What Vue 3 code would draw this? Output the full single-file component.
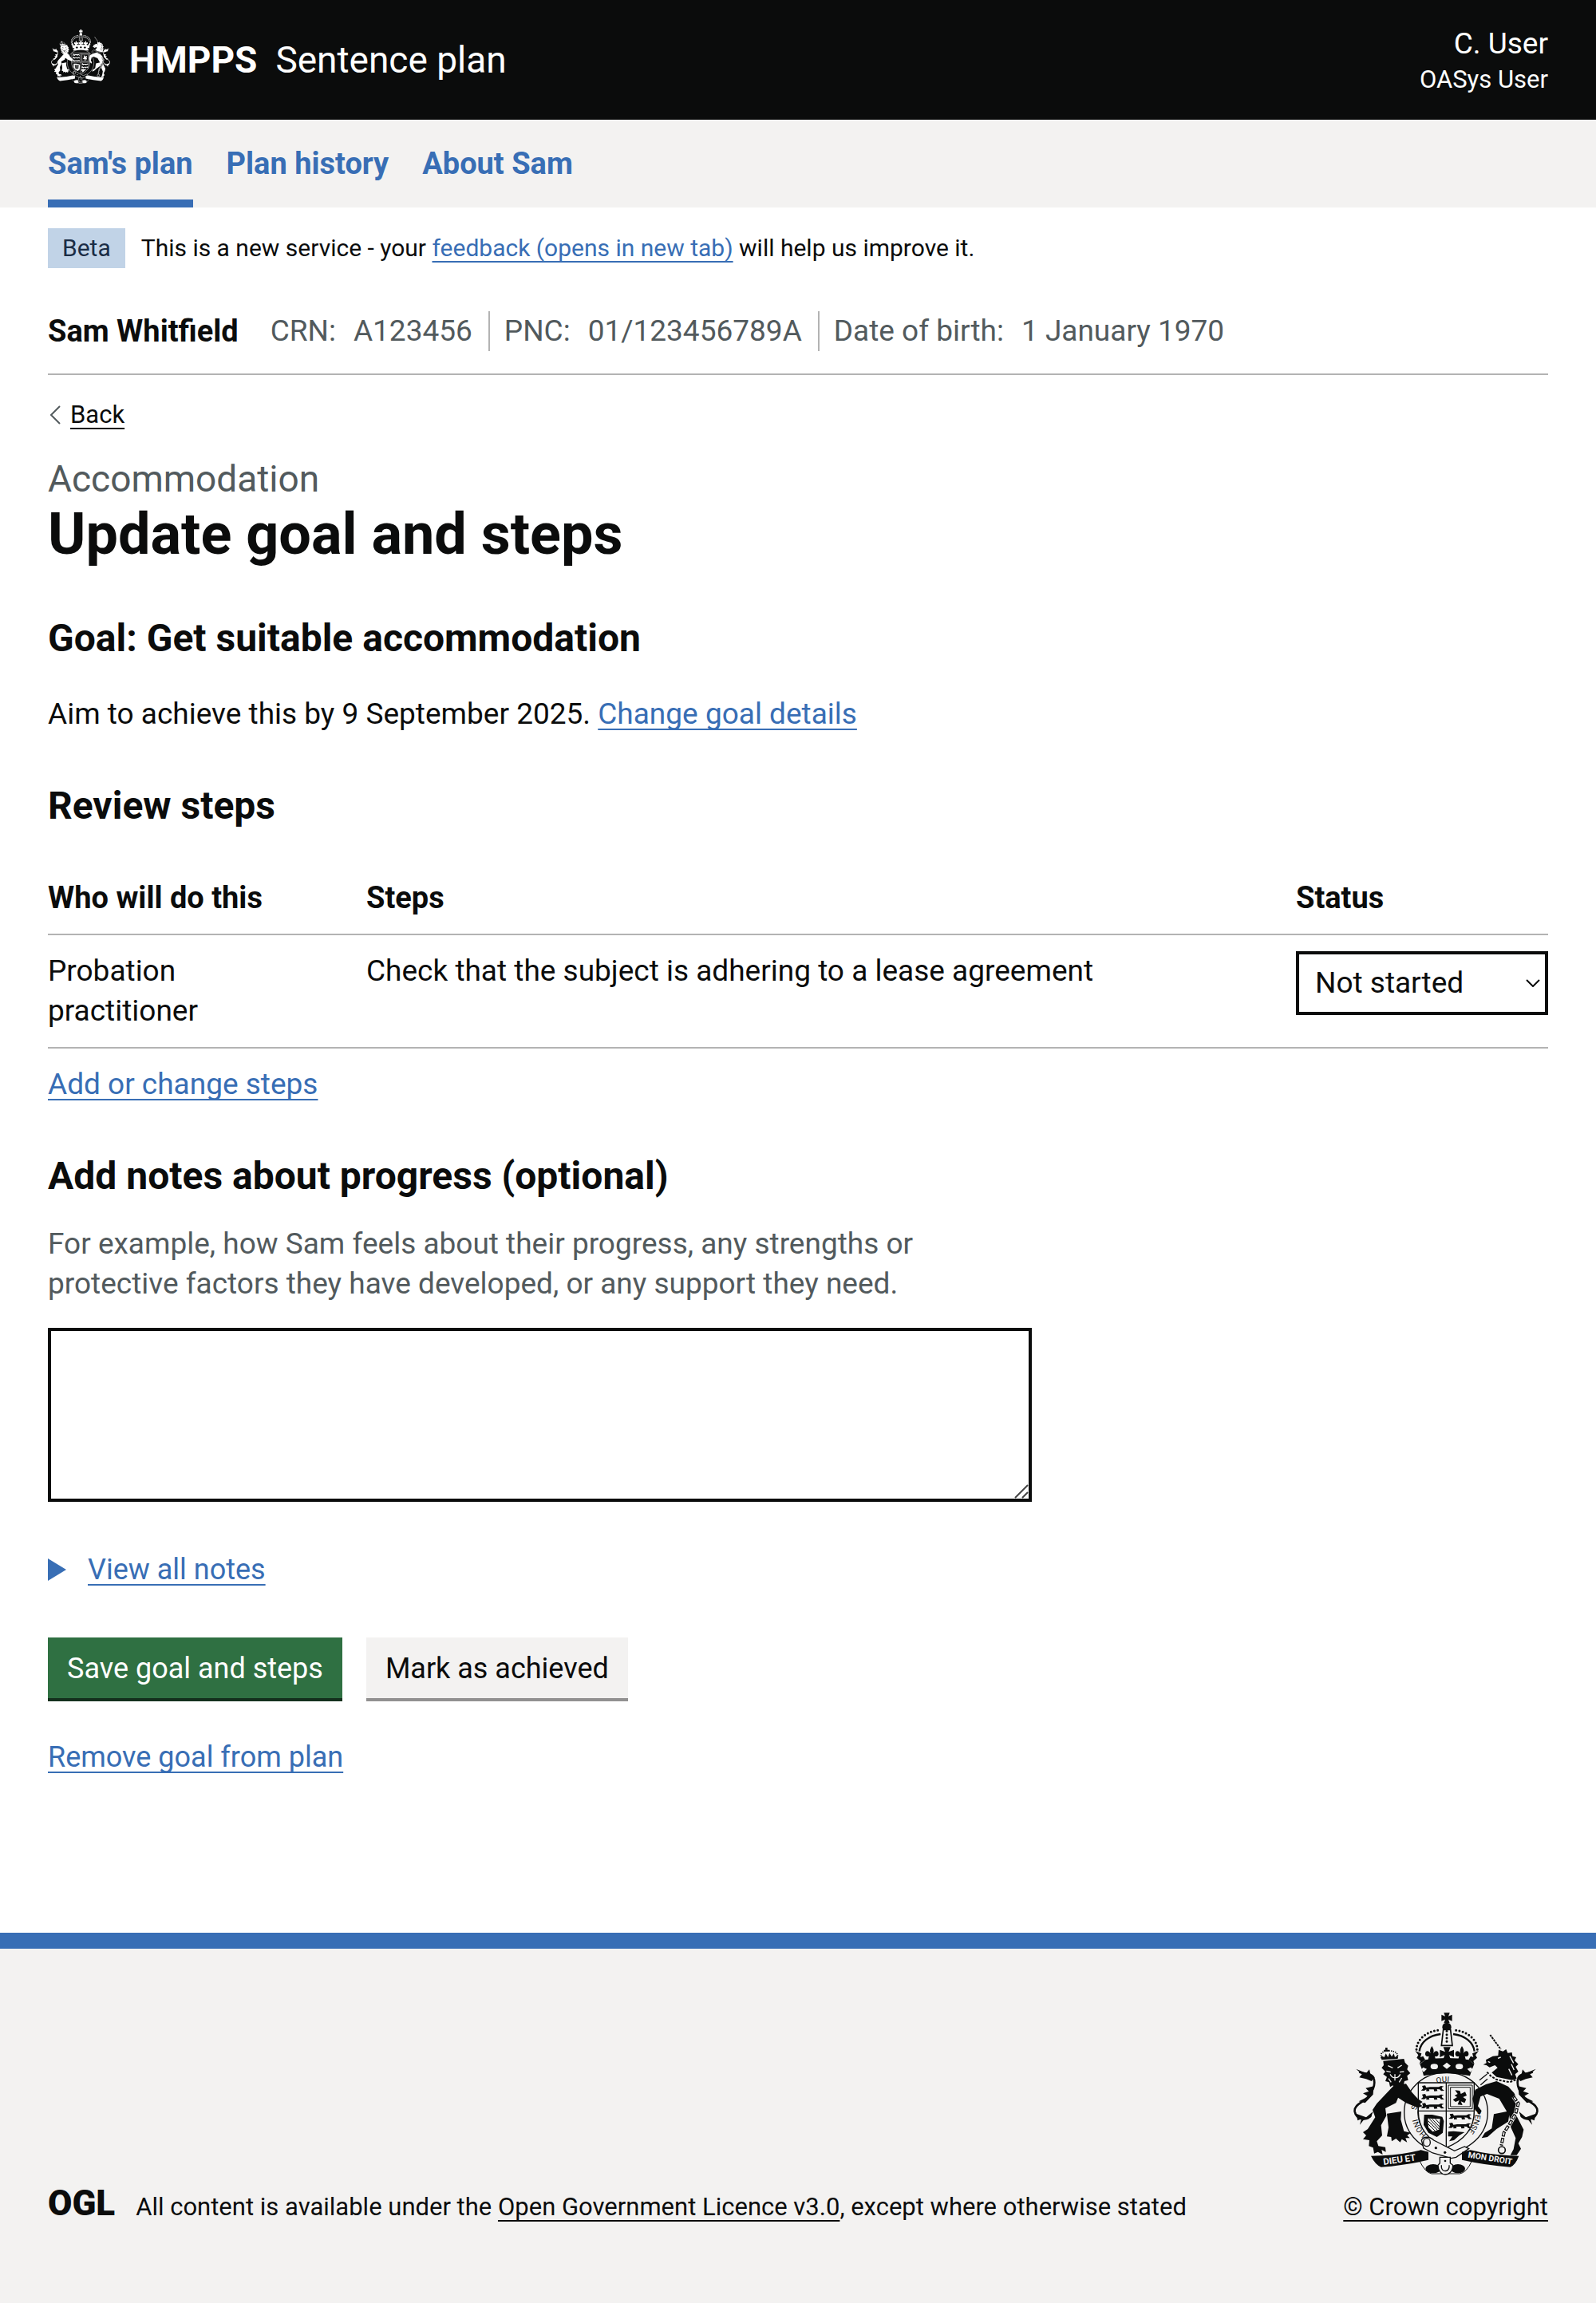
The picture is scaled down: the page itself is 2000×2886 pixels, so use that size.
<script setup>
import { ref } from 'vue'

const navItems = [
  { label: "Sam's plan", current: true },
  { label: 'Plan history', current: false },
  { label: 'About Sam', current: false },
]

const details = [
  { term: 'CRN:', value: 'A123456' },
  { term: 'PNC:', value: '01/123456789A' },
  { term: 'Date of birth:', value: '1 January 1970' },
]

const statuses = ['Not started', 'In progress', 'Cannot be done yet', 'No longer needed', 'Completed']

const steps = ref([
  {
    actor: 'Probation practitioner',
    text: 'Check that the subject is adhering to a lease agreement',
    status: 'Not started',
  },
])
const notes = ref('')
</script>

<template>
  <svg class="sprite" aria-hidden="true">
    <defs>
      <g id="crest-tail">
        <path d="M168 455C150 478 112 468 107 440C104 412 140 408 160 382C180 355 186 330 176 310C166 294 140 300 124 292" fill="none" stroke="currentColor" stroke-width="8" />
        <path d="M112 280L150 296L162 282L166 300L182 312L170 326L150 318L124 312L134 300Z" fill="currentColor" />
        <path d="M178 345L148 352L160 364L138 372L158 384L122 402L146 408L176 376Z" fill="currentColor" />
        <path d="M112 448L118 474L132 468L126 490L142 470L168 462L176 440L150 462Z" fill="currentColor" />
      </g>
      <g id="crest-arch">
        <path d="M339 207C340 165 385 134 432 134" fill="none" stroke="currentColor" stroke-width="9" stroke-linecap="round" stroke-dasharray="0 13" />
        <path d="M350 214C354 180 386 154 430 149" fill="none" stroke="currentColor" stroke-width="7" />
        <path d="M334 212L358 222L354 236L364 232L372 246L350 262L354 250L340 238L346 228Z" fill="currentColor" />
        <path d="M397 194C390 204 388 212 392 222C384 206 370 212 372 226C374 234 382 234 386 232L380 256H414L408 232C412 234 420 234 422 226C424 212 410 206 402 222C406 212 404 204 397 194Z" fill="currentColor" />
      </g>
      <g id="crest-pard">
        <path d="M4 2L16 0L20 8L34 6H66L76 2L86 4L78 8L80 14L88 20L76 21L70 15L60 14L62 21L50 22L48 15L30 15L32 21L20 22L20 15L12 20L0 19L8 12Z" fill="currentColor" />
      </g>
      <symbol id="crest" viewBox="102 68 696 612" preserveAspectRatio="none">
        <!-- garter and shield -->
        <ellipse cx="450" cy="443" rx="157" ry="150" fill="var(--paper)" stroke="currentColor" stroke-width="4" />
        <ellipse cx="450" cy="443" rx="106" ry="110" fill="var(--paper)" stroke="currentColor" stroke-width="3" />
        <path d="M346 332H556V440C556 505 515 550 451 576C387 550 346 505 346 440Z" fill="var(--paper)" stroke="currentColor" stroke-width="4" />
        <path d="M451 332V576M346 438H556" stroke="currentColor" stroke-width="4" />
        <use href="#crest-pard" x="356" y="342" />
        <use href="#crest-pard" x="356" y="374" />
        <use href="#crest-pard" x="356" y="408" />
        <use href="#crest-pard" x="460" y="448" />
        <use href="#crest-pard" x="458" y="482" />
        <path d="M458 516L478 514L520 518L500 530L480 548L462 552L474 534L458 534Z" fill="currentColor" />
        <path d="M459 341H549V430H459ZM467 349H541V422H467Z" fill="none" stroke="currentColor" stroke-width="3" />
        <path d="M484 360L502 362L506 374L522 366L528 380L514 386L526 394L520 408L506 402L512 416L494 414L500 398L486 404L476 396L492 386L482 380L494 374Z" fill="currentColor" />
        <path d="M368 452H398L436 460L442 476L438 520L416 536L384 520L366 490Z" fill="currentColor" />
        <path d="M382 466L428 468L424 508L400 516L384 500Z" fill="var(--paper)" />
        <path d="M388 468L424 506M398 468L426 498M410 468L427 486M384 476L418 510M384 488L408 512" stroke="currentColor" stroke-width="3" />
        <!-- belt -->
        <path d="M358 548C364 534 388 532 404 548L482 588L520 572L536 580L488 612L470 616L400 596L366 578Z" fill="var(--paper)" stroke="currentColor" stroke-width="4" />
        <ellipse cx="378" cy="556" rx="13" ry="15" fill="none" stroke="currentColor" stroke-width="4" />
        <circle cx="412" cy="577" r="5" fill="currentColor" />
        <circle cx="446" cy="594" r="5" fill="currentColor" />
        <path d="M350 624Q372 670 396 674H502Q528 670 548 624" fill="none" stroke="currentColor" stroke-width="3" />
        <ellipse cx="402" cy="655" rx="29" ry="17" fill="currentColor" />
        <ellipse cx="495" cy="655" rx="27" ry="17" fill="currentColor" />
        <path d="M427 612H466V634L476 642C476 666 460 677 447 677C434 677 420 664 420 642L427 634Z" fill="var(--paper)" stroke="currentColor" stroke-width="4" />
        <path d="M433 642V650C436 668 458 668 462 650V642" fill="none" stroke="currentColor" stroke-width="4" />
        <circle cx="447" cy="626" r="4" fill="currentColor" />
        <!-- scrolls -->
        <path d="M168 607L208 606Q290 602 356 585L384 592V622Q300 642 206 649Q184 640 168 607Z" fill="currentColor" />
        <path d="M724 607L690 606Q610 602 542 585L510 592V622Q600 642 692 649Q712 640 724 607Z" fill="currentColor" />
        <!-- crown -->
        <path d="M442 69H464L459 82L473 76V100L459 94L464 108H442L447 94L433 100V76L447 82Z" fill="currentColor" />
        <circle cx="453" cy="123" r="17" fill="currentColor" />
        <use href="#crest-arch" />
        <use href="#crest-arch" transform="matrix(-1 0 0 1 907 0)" />
        <path d="M440 132L433 192H474L467 132Z" fill="var(--paper)" stroke="currentColor" stroke-width="5" />
        <path d="M453 138V190" stroke="currentColor" stroke-width="9" stroke-linecap="round" stroke-dasharray="0 13" />
        <path d="M440 198H467L460 216L480 208V236L462 228L470 252H437L445 228L427 236V208L447 216Z" fill="currentColor" />
        <path d="M352 262L372 246Q453 232 536 246L556 262L548 282L540 306Q453 288 366 306L360 282Z" fill="currentColor" />
        <ellipse cx="406" cy="271" rx="14" ry="10" fill="var(--paper)" />
        <ellipse cx="500" cy="271" rx="14" ry="10" fill="var(--paper)" />
        <path d="M453 256L468 268L453 280L438 268ZM364 274L378 280L366 292L358 282ZM544 274L530 280L542 292L550 282Z" fill="var(--paper)" />
        <!-- lion -->
        <use href="#crest-tail" />
        <path d="M256 340L300 336L322 368L344 392L362 404L352 412L362 420L344 426L300 408L270 388L262 408L222 428L226 456L206 492L210 530L190 552L196 570L222 574L224 592L208 584L212 602L194 592L180 598L176 576L160 570L162 548L138 544L150 530L138 518L156 506L184 462L174 434L190 410Z" fill="currentColor" />
        <path d="M228 448L282 440L280 470L292 514L318 520L304 530L314 540L298 540L304 556L284 544L278 556L262 542L246 552L244 536L228 534L234 500Z" fill="currentColor" />
        <path d="M214 250L292 242L296 256L308 268L304 282L316 296L304 306L308 322L294 326L290 342L276 340L264 356L250 342L240 348L236 330L222 326L228 310L214 300L222 290L208 276L216 266Z" fill="currentColor" />
        <path d="M232 268L250 276M284 266L268 276M258 300V324M240 300Q250 316 258 312Q270 316 278 300M226 288L242 292M292 290L276 292M234 316L244 330M284 314L274 330" fill="none" stroke="var(--paper)" stroke-width="4" />
        <path d="M208 240C200 220 214 212 236 212C260 212 274 222 266 240" fill="none" stroke="currentColor" stroke-width="5" stroke-dasharray="4 4" />
        <path d="M208 246L206 230L218 236L224 222L232 236L238 220L246 234L254 222L258 236L270 228L268 242ZM222 200H230V208H238V214H216V208H222Z" fill="currentColor" />
        <!-- unicorn -->
        <use href="#crest-tail" transform="matrix(-1 0 0 1 900 0)" />
        <path d="M616 152L656 206" stroke="currentColor" stroke-width="6" stroke-dasharray="8 3" />
        <path d="M648 208L664 214L676 206L682 220L698 218L700 232L714 236L708 248L722 262L712 272L722 290L710 300L716 316L698 322L640 310L622 294L644 276L634 266L614 274L602 266L590 264L602 258L600 246L626 232L646 230Z" fill="currentColor" />
        <path d="M645 240L656 236M690 232L704 258M696 262L706 284M686 280L698 304M608 252L616 256" stroke="var(--paper)" stroke-width="4" />
        <path d="M604 292L620 308L640 320L690 330L714 320" fill="none" stroke="currentColor" stroke-width="6" stroke-dasharray="9 5" />
        <path d="M600 338L640 326L684 346L706 370L724 408L716 458L742 508L736 536L722 560L732 580L716 604L692 604L704 582L712 540L694 500L688 456L650 392L604 374L580 384L570 420L584 438L576 452L558 432L550 392L560 358Z" fill="currentColor" />
        <path d="M630 450L690 438L684 478L640 506L606 536L584 540L596 520L622 504Z" fill="currentColor" />
        <path d="M576 322L604 300M580 340L606 318" stroke="currentColor" stroke-width="4" />
        <path d="M704 384L722 410L712 448L690 486L668 520L658 568" fill="none" stroke="var(--paper)" stroke-width="16" />
        <path d="M704 384L722 410L712 448L690 486L668 520L658 568" fill="none" stroke="currentColor" stroke-width="12" stroke-dasharray="20 5" />
        <path d="M704 384L722 410L712 448L690 486L668 520L658 568" fill="none" stroke="var(--paper)" stroke-width="5" stroke-dasharray="12 13" stroke-dashoffset="-4" />
        <circle cx="660" cy="585" r="13" fill="none" stroke="currentColor" stroke-width="5" />
      </symbol>
    </defs>
  </svg>

  <div class="page">
    <header class="header">
      <div class="brand">
        <svg class="brand-crest" aria-hidden="true"><use href="#crest" /></svg>
        <a class="brand-org" href="#">HMPPS</a>
        <a class="brand-service" href="#">Sentence plan</a>
      </div>
      <div class="user">
        <span class="user-name">C. User</span>
        <span class="user-role">OASys User</span>
      </div>
    </header>

    <nav class="nav" aria-label="Primary">
      <a
        v-for="item in navItems"
        :key="item.label"
        href="#"
        class="nav-link"
        :class="{ current: item.current }"
        :aria-current="item.current ? 'page' : undefined"
      >{{ item.label }}</a>
    </nav>

    <div class="container">
      <div class="phase">
        <strong class="tag">Beta</strong>
        <span>This is a new service - your <a class="link" href="#">feedback (opens in new tab)</a> will help us improve it.</span>
      </div>

      <div class="person">
        <strong class="person-name">Sam Whitfield</strong>
        <dl class="person-list">
          <div v-for="d in details" :key="d.term" class="person-item">
            <dt>{{ d.term }}</dt>
            <dd>{{ d.value }}</dd>
          </div>
        </dl>
      </div>

      <div class="back">
        <svg viewBox="0 0 14 24" aria-hidden="true"><path d="M13 1L2 12L13 23" /></svg>
        <a class="link dark" href="#">Back</a>
      </div>

      <main>
        <div class="caption">Accommodation</div>
        <h1>Update goal and steps</h1>

        <h2>Goal: Get suitable accommodation</h2>
        <p class="aim">Aim to achieve this by 9 September 2025. <a class="link" href="#">Change goal details</a></p>

        <h2>Review steps</h2>
        <table>
          <thead>
            <tr>
              <th scope="col" class="col-who">Who will do this</th>
              <th scope="col">Steps</th>
              <th scope="col" class="col-status">Status</th>
            </tr>
          </thead>
          <tbody>
            <tr v-for="(step, i) in steps" :key="i">
              <td class="col-who">{{ step.actor }}</td>
              <td>{{ step.text }}</td>
              <td>
                <div class="select-wrap">
                  <select :id="`status-${i}`" v-model="step.status" :aria-label="`Status of step ${i + 1}`">
                    <option v-for="s in statuses" :key="s">{{ s }}</option>
                  </select>
                  <svg viewBox="0 0 18 10" aria-hidden="true"><path d="M1 1L9 9L17 1" /></svg>
                </div>
              </td>
            </tr>
          </tbody>
        </table>
        <p class="change-steps"><a class="link" href="#">Add or change steps</a></p>

        <h2><label for="notes">Add notes about progress (optional)</label></h2>
        <div class="notes">
          <p id="notes-hint" class="hint">For example, how Sam feels about their progress, any strengths or protective factors they have developed, or any support they need.</p>
          <div class="textarea-wrap">
            <textarea id="notes" v-model="notes" aria-describedby="notes-hint"></textarea>
            <svg viewBox="0 0 18 18" aria-hidden="true"><path d="M1 17L17 1M10 17L17 10" /></svg>
          </div>
        </div>

        <details>
          <summary><span class="link">View all notes</span></summary>
        </details>

        <div class="buttons">
          <button type="submit" class="button primary">Save goal and steps</button>
          <button type="button" class="button secondary">Mark as achieved</button>
        </div>
        <p class="remove"><a class="link" href="#">Remove goal from plan</a></p>
      </main>
    </div>

    <footer class="footer">
      <div class="licence">
        <span class="ogl">OGL</span>
        <span>All content is available under the <a class="link dark" href="#">Open Government Licence v3.0</a>, except where otherwise stated</span>
      </div>
      <div class="copyright">
        <svg class="footer-crest" viewBox="102 68 696 612" aria-hidden="true">
          <use href="#crest" x="102" y="68" width="696" height="612" />
          <path id="motto-ring" d="M385 533A110 113 0 1 1 515 533" fill="none" />
          <text class="motto"><textPath href="#motto-ring" startOffset="10">HONI</textPath></text>
          <text class="motto"><textPath href="#motto-ring" startOffset="112">SO</textPath></text>
          <text class="motto"><textPath href="#motto-ring" startOffset="245">QUI</textPath></text>
          <text class="motto"><textPath href="#motto-ring" startOffset="446">PENSE</textPath></text>
          <text class="scroll-text" x="216" y="641" transform="rotate(-8 216 641)">DIEU ET</text>
          <text class="scroll-text small" x="532" y="613" transform="rotate(9 532 613)">MON DROIT</text>
        </svg>
        <a class="link dark" href="#">© Crown copyright</a>
      </div>
    </footer>
  </div>
</template>

<style>
body {
  margin: 0;
  background: #fff;
}
</style>

<style scoped>
.page {
  --ink: #0b0c0c;
  --blue: #386eb5;
  --grey-text: #525a5d;
  --panel: #f3f2f1;
  --rule: #b3b3b3;
  font: 400 37px/50px Roboto, "Liberation Sans", sans-serif;
  color: var(--ink);
}
.sprite {
  position: absolute;
  width: 0;
  height: 0;
}
h1, h2, p, dl, dd {
  margin: 0;
}
.link {
  color: var(--blue);
  text-decoration: underline;
  text-decoration-thickness: 2px;
  text-decoration-skip-ink: none;
  text-underline-offset: 6px;
}
.link.dark {
  color: var(--ink);
}

.header {
  display: flex;
  justify-content: space-between;
  align-items: center;
  padding: 30px 60px;
  background: var(--ink);
  color: #fff;
}
.brand {
  display: flex;
  align-items: center;
  font-size: 46px;
  line-height: 56px;
}
.brand a {
  color: #fff;
  text-decoration: none;
}
.brand-crest {
  --paper: var(--ink);
  width: 74px;
  height: 68px;
  margin: 0 24px 8px 4px;
}
.brand-org {
  font-weight: 700;
  margin-right: 23px;
}
.user {
  display: flex;
  flex-direction: column;
  text-align: right;
}
.user-role {
  font-size: 31px;
  line-height: 40px;
}

.nav {
  display: flex;
  gap: 42px;
  padding: 30px 60px 0;
  background: var(--panel);
}
.nav-link {
  padding-bottom: 20px;
  border-bottom: 10px solid transparent;
  font-size: 38px;
  font-weight: 700;
  color: var(--blue);
  text-decoration: none;
}
.nav-link.current {
  border-color: var(--blue);
}

.container {
  padding: 26px 60px 195px;
}
.phase {
  display: flex;
  gap: 20px;
  font-size: 30px;
}
.tag {
  padding: 0 18px;
  background: #c1d3e7;
  color: #1b2d46;
  font-weight: 400;
}

.person {
  display: flex;
  gap: 40px;
  margin-top: 54px;
  padding-bottom: 28px;
  border-bottom: 2px solid var(--rule);
}
.person-name {
  font-size: 38px;
  font-weight: 700;
}
.person-list {
  display: flex;
  color: var(--grey-text);
}
.person-item {
  display: flex;
  gap: 22px;
}
.person-item + .person-item {
  margin-left: 20px;
  padding-left: 18px;
  border-left: 2px solid var(--rule);
}

.back {
  display: flex;
  align-items: center;
  gap: 12px;
  margin-top: 30px;
  padding-left: 2px;
  font-size: 31px;
  line-height: 40px;
}
.back svg {
  width: 14px;
  height: 24px;
  fill: none;
  stroke: var(--grey-text);
  stroke-width: 2;
}

.caption {
  margin-top: 30px;
  font-size: 46px;
  line-height: 60px;
  color: var(--grey-text);
}
h1 {
  font-size: 72px;
  line-height: 80px;
  font-weight: 700;
}
h2 {
  margin-top: 60px;
  font-size: 48px;
  line-height: 60px;
  font-weight: 700;
}
.aim {
  margin-top: 40px;
}

table {
  width: 100%;
  margin-top: 40px;
  border-collapse: separate;
  border-spacing: 0;
  table-layout: fixed;
}
th, td {
  padding: 20px 40px 20px 0;
  border-bottom: 2px solid var(--rule);
  text-align: left;
  vertical-align: top;
}
th {
  font-size: 38px;
  font-weight: 700;
}
th:last-child, td:last-child {
  padding-right: 0;
}
.col-who {
  width: 319px;
  padding-right: 80px;
}
.col-status {
  width: 316px;
}
.select-wrap, .textarea-wrap {
  position: relative;
}
select {
  display: block;
  box-sizing: border-box;
  width: 100%;
  height: 80px;
  padding: 0 40px 0 20px;
  border: 4px solid var(--ink);
  border-radius: 0;
  appearance: none;
  background: #fff;
  color: var(--ink);
  font: inherit;
}
.select-wrap svg {
  position: absolute;
  right: 10px;
  top: 35px;
  width: 18px;
  height: 10px;
  fill: none;
  stroke: var(--ink);
  stroke-width: 2;
  pointer-events: none;
}
.change-steps {
  margin-top: 20px;
}

.notes {
  width: calc((100% + 60px) * 2 / 3 - 60px);
  margin-top: 30px;
}
.hint {
  max-width: 1110px;
  color: var(--grey-text);
}
.textarea-wrap {
  margin-top: 30px;
}
textarea {
  display: block;
  box-sizing: border-box;
  width: 100%;
  height: 218px;
  padding: 10px;
  border: 4px solid var(--ink);
  border-radius: 0;
  background: #fff;
  color: var(--ink);
  font: inherit;
  resize: vertical;
}
textarea::-webkit-resizer {
  display: none;
}
.textarea-wrap svg {
  position: absolute;
  right: 4px;
  bottom: 4px;
  width: 18px;
  height: 18px;
  fill: none;
  stroke: #444;
  stroke-width: 2;
  pointer-events: none;
}

details {
  margin-top: 60px;
}
summary {
  display: flex;
  align-items: center;
  gap: 27px;
  list-style: none;
  font-size: 36px;
  cursor: pointer;
}
summary::before {
  content: "";
  border-style: solid;
  border-width: 14px 0 14px 23px;
  border-color: transparent transparent transparent var(--blue);
}

.buttons {
  display: flex;
  gap: 30px;
  margin-top: 60px;
}
.button {
  height: 80px;
  padding: 2px 24px 0;
  border: 0;
  border-bottom: 4px solid;
  font: inherit;
  font-size: 36px;
}
.primary {
  background: #2f7042;
  border-color: #14301d;
  color: #fff;
}
.secondary {
  background: var(--panel);
  border-color: #929191;
  color: var(--ink);
}
.remove {
  margin-top: 45px;
  font-size: 36px;
}

.footer {
  display: flex;
  justify-content: space-between;
  align-items: flex-end;
  padding: 80px 60px 100px;
  border-top: 20px solid var(--blue);
  background: var(--panel);
  font-size: 31px;
  line-height: 40px;
}
.licence {
  display: flex;
  align-items: baseline;
  gap: 26px;
}
.ogl {
  font-size: 44px;
  font-weight: 900;
}
.copyright {
  display: flex;
  flex-direction: column;
  align-items: center;
  gap: 20px;
}
.footer-crest {
  --paper: var(--panel);
  width: 232px;
  height: 204px;
}
.motto {
  font-size: 29px;
  fill: var(--ink);
}
.scroll-text {
  font-size: 34px;
  font-weight: 700;
  fill: var(--panel);
}
.scroll-text.small {
  font-size: 31px;
}
</style>
